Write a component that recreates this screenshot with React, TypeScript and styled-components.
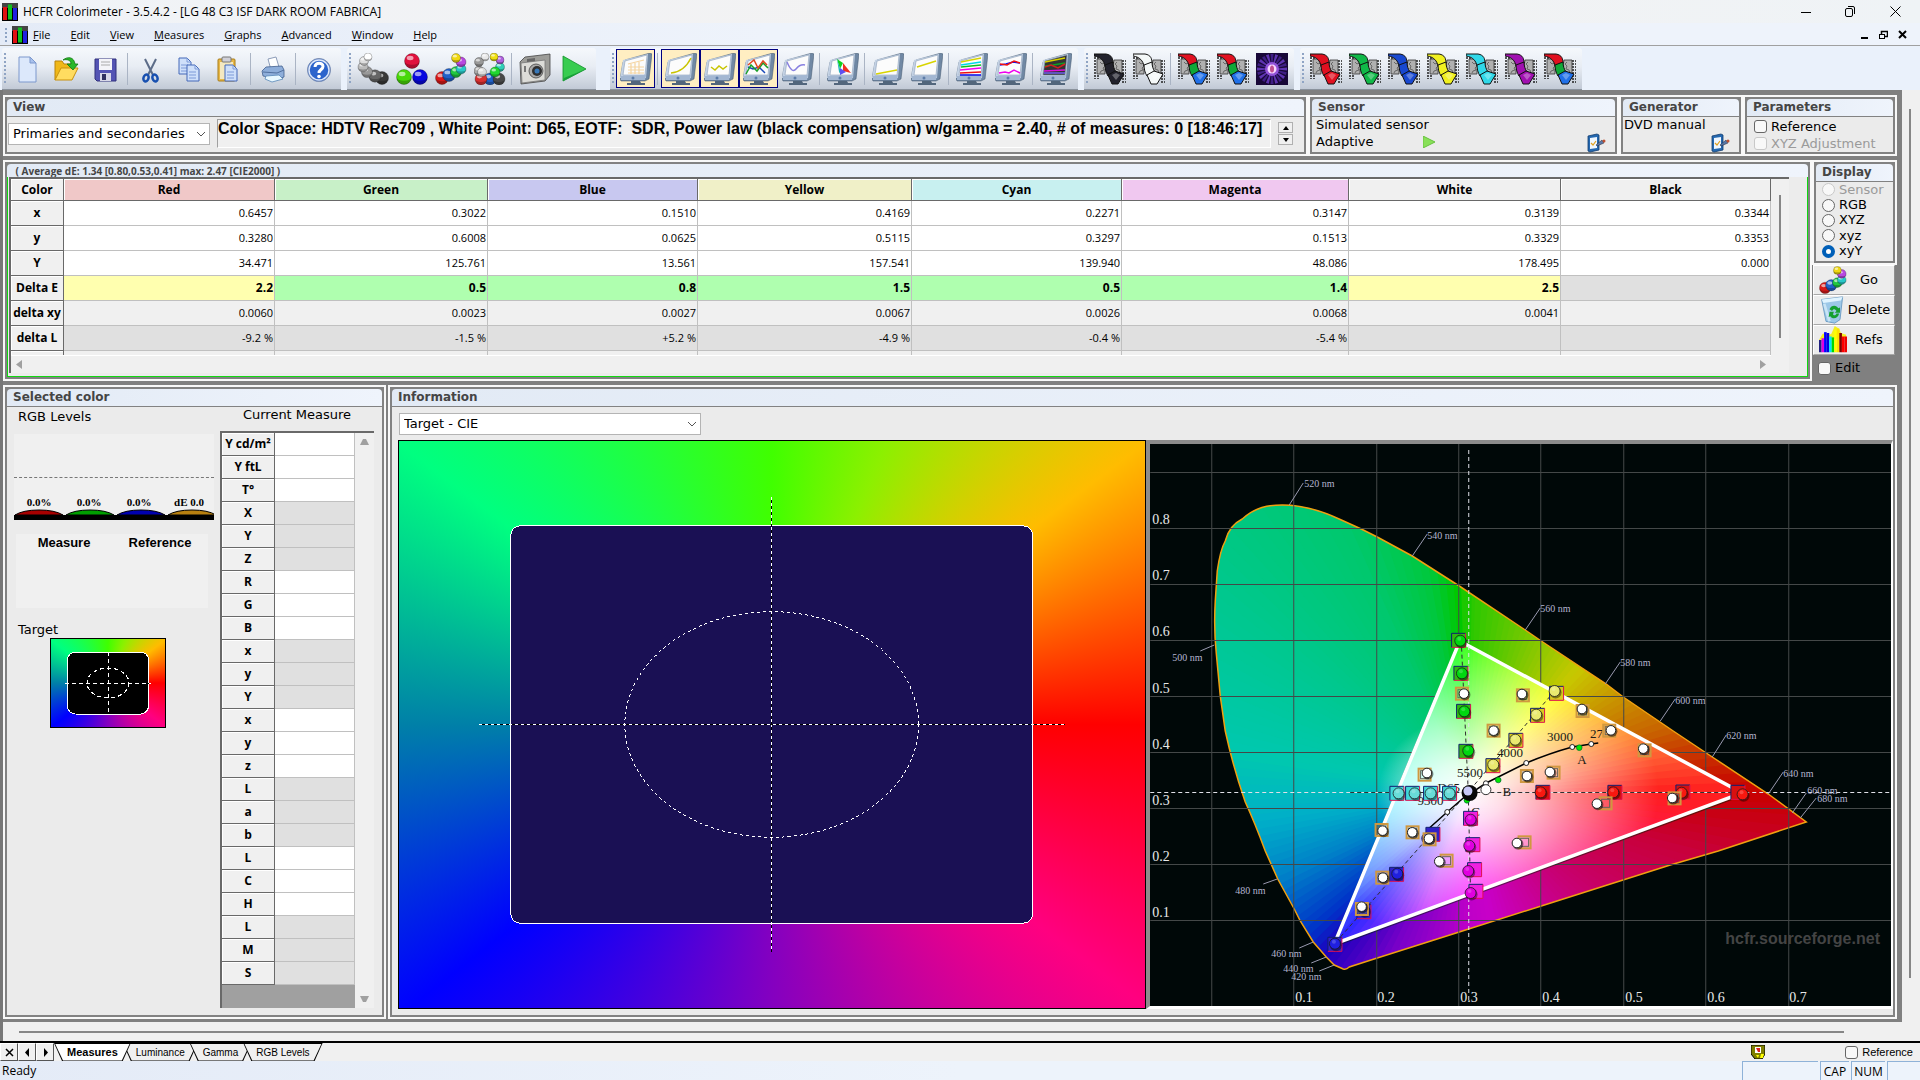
import React from "react";
import styled, { createGlobalStyle, css } from "styled-components";

const GlobalStyle = createGlobalStyle`
  * { box-sizing: border-box; }
  body { margin: 0; background: #f0f0f0; color: #000; font: 13px/16px "DejaVu Sans", Verdana, sans-serif; }
  button, input, select { font: inherit; color: inherit; margin: 0; padding: 0; }
`;

const ui = `"Open Sans", "Noto Sans", sans-serif`;
const arial = `"Liberation Sans", Arial, sans-serif`;
const serif = `"Liberation Serif", "Times New Roman", serif`;
const edge = "#828282";

/* ---------- window chrome ---------- */
const Window = styled.div`
  height: 100vh;
  min-height: 860px;
  display: flex;
  flex-direction: column;
`;
const TitleBar = styled.header`
  display: flex;
  align-items: center;
  height: 23px;
  flex: none;
  padding: 0 2px;
  background: linear-gradient(90deg, #f0f3f7, #f3f2f2 55%, #eff3f6);
  font: 12px/16px ${ui};
`;
const Title = styled.h1`
  margin: 0 0 0 5px;
  flex: 1;
  font: inherit;
`;
const WindowButton = styled.button<{ $small?: boolean }>`
  width: ${(p) => (p.$small ? 19 : 45)}px;
  height: 20px;
  border: 0;
  background: none;
  display: grid;
  place-items: center;
`;
const MenuBar = styled.nav`
  display: flex;
  align-items: center;
  height: 23px;
  flex: none;
  padding: 1px 8px 0 5px;
  background: linear-gradient(90deg, #e4ebf7, #eef3fb 40%);
  border-bottom: 1px solid #a0a0a0;
  font: 11px/16px ${ui};
`;
const MenuItem = styled.button`
  border: 0;
  background: none;
  padding: 0 9px;
  &::first-letter { text-decoration: underline; }
`;
const MenuList = styled.div`
  display: flex;
  flex: 1;
  gap: 2px;
  margin-left: -4px;
`;
const Grip = styled.span<{ $short?: boolean }>`
  width: 2px;
  flex: none;
  height: ${(p) => (p.$short ? 14 : 32)}px;
  background: repeating-linear-gradient(#8fa4c4 0 2px, transparent 2px 4px);
  margin: 0 ${(p) => (p.$short ? 5 : 2)}px 0 ${(p) => (p.$short ? 0 : 2)}px;
`;
const ToolbarRow = styled.div`
  display: flex;
  gap: 6px;
  height: 44px;
  flex: none;
  padding: 2px 2px 0;
  background: #eaf1fb;
`;
const Band = styled.div<{ $apart?: boolean }>`
  display: flex;
  align-items: center;
  padding-right: 3px;
  margin-left: ${(p) => (p.$apart ? 8 : 0)}px;
  border-radius: 3px 3px 0 0;
  background: linear-gradient(#f5f8fc, #e8edf4 45%, #c2cad6);
  border-bottom: 1px solid #8a929c;
`;
const ToolButton = styled.button<{ $on?: boolean }>`
  width: 39px;
  height: 39px;
  display: grid;
  place-items: center;
  border: ${(p) => (p.$on ? "1px solid #000080" : "0")};
  background: ${(p) => (p.$on ? "#ffeec2" : "none")};
`;
const ToolSeparator = styled.span`
  width: 1px;
  height: 32px;
  margin: 0 3px 0 2px;
  background: #aab4c4;
`;

/* ---------- workspace ---------- */
const Workspace = styled.main`
  display: grid;
  grid-template: minmax(0, 1fr) 19px / minmax(0, 1fr) 18px;
  flex: 1;
  min-height: 0;
  border-left: 3px solid #777;
  background: #f0f0f0;
`;
const Desk = styled.div`
  display: flex;
  flex-direction: column;
  gap: 4px;
  min-height: 0;
  padding: 5px 5px 3px 0;
  background: #808080;
`;
const ScrollBar = styled.div<{ $across?: boolean }>`
  display: flex;
  justify-content: center;
  background: #f0f0f0;
  ${(p) =>
    p.$across
      ? css`flex-direction: column; padding: 0 58px 0 16px;`
      : css`padding: 19px 3px 44px 0;`}
`;
const Thumb = styled.span<{ $across?: boolean }>`
  background: #868686;
  ${(p) => (p.$across ? css`height: 2px;` : css`width: 2px;`)}
`;
const TopRow = styled.div`
  display: flex;
  height: 61px;
  flex: none;
`;
const MeasureRow = styled.div`
  display: flex;
  height: 221px;
  flex: none;
`;
const DetailRow = styled.div`
  display: flex;
  gap: 2px;
  flex: 1;
  min-height: 0;
`;
const Frame = styled.section<{ $width?: number }>`
  display: flex;
  flex: ${(p) => (p.$width ? `0 0 ${p.$width}px` : "1 1 0")};
  min-width: 0;
  min-height: 0;
  padding: 2px;
  background: #f8f8f8;
`;
const FrameInner = styled.div`
  flex: 1;
  display: flex;
  flex-direction: column;
  min-width: 0;
  min-height: 0;
  border: 2px solid ${edge};
  background: ${edge};
`;
const FrameTitle = styled.h2<{ $thin?: boolean }>`
  margin: 0 0 ${(p) => (p.$thin ? 0 : 1)}px;
  height: ${(p) => (p.$thin ? 13 : 17)}px;
  flex: none;
  padding-left: 6px;
  overflow: hidden;
  white-space: pre;
  border-radius: 4px 4px 0 0;
  background: linear-gradient(90deg, #e2eaf5, #eff4fc);
  color: #454545;
  font: bold 12px/17px "DejaVu Sans", Verdana, sans-serif;
  ${(p) => p.$thin && css`font: bold 10px/15px ${ui};`}
`;
const FrameBody = styled.div`
  flex: 1;
  display: flex;
  min-height: 0;
  background: #ebebeb;
`;

const SelectWrap = styled.div<{ $width: number }>`
  position: relative;
  width: ${(p) => p.$width}px;
  height: 22px;
`;
const Select = styled.select`
  appearance: none;
  width: 100%;
  height: 22px;
  padding-left: 4px;
  border: 1px solid #b4b4b4;
  border-radius: 0;
  background: #fff;
`;
const Chevron = styled.svg`
  position: absolute;
  right: 4px;
  top: 8px;
  pointer-events: none;
`;
const ViewBody = styled(FrameBody)`
  gap: 7px;
  padding: 2px 11px 4px 1px;
  align-items: center;
`;
const StatusText = styled.output`
  flex: 1;
  height: 29px;
  overflow: hidden;
  white-space: pre;
  border: 1px solid;
  border-color: #a0a0a0 #fff #fff #a0a0a0;
  background: #f0f0f0;
  font: bold 16px/18px ${arial};
`;
const Spinner = styled.div`
  display: flex;
  flex-direction: column;
  gap: 1px;
`;
const SpinButton = styled.button`
  width: 15px;
  height: 11px;
  border: 1px solid #b0b0b0;
  background: #f0f0f0;
  display: grid;
  place-items: center;
`;
const LinesBody = styled(FrameBody)<{ $flush?: boolean }>`
  flex-direction: column;
  padding: 0 3px 0 ${(p) => (p.$flush ? 1 : 4)}px;
`;
const Line = styled.div`
  display: flex;
  align-items: center;
  height: 17px;
  line-height: 15px;
  padding-bottom: 2px;
  white-space: nowrap;
`;
const Spread = styled.span<{ $w: number }>`
  width: ${(p) => p.$w}px;
`;
const IconButton = styled.button<{ $right?: boolean }>`
  width: 20px;
  height: 18px;
  flex: none;
  border: 0;
  background: none;
  display: grid;
  place-items: center;
  margin-left: ${(p) => (p.$right ? "auto" : "0")};
  margin-right: ${(p) => (p.$right ? 6 : 0)}px;
`;
const Choice = styled.label<{ $off?: boolean; $height?: number }>`
  display: flex;
  align-items: center;
  gap: 4px;
  height: ${(p) => p.$height ?? 16}px;
  color: ${(p) => (p.$off ? "#9a9a9a" : "#000")};
  white-space: nowrap;
`;
const Tick = styled.input`
  appearance: none;
  width: 13px;
  height: 13px;
  flex: none;
  border: 1px solid #666;
  border-radius: ${(p) => (p.type === "radio" ? "50%" : "3px")};
  background: #f8f8f8;
  &:disabled { border-color: #c8c8c8; }
  &:checked { border: 4px solid #005fb8; background: #fff; }
`;
const ParamBody = styled(LinesBody)`
  padding: 1px 3px 0 7px;
`;

/* ---------- measures grid ---------- */
const GridBody = styled.div`
  flex: 1;
  display: flex;
  min-height: 0;
  padding: 0 18px 3px 1px;
  border: 1px solid #10d810;
  border-top: 0;
  background: #ececec;
`;
const GridBox = styled.div`
  flex: 1;
  min-width: 0;
  display: grid;
  grid-template: minmax(0, 1fr) 17px / minmax(0, 1fr) 18px;
  border: 1px solid #696969;
  border-width: 2px 0 0 2px;
  background: #f0f0f0;
`;
const GridView = styled.div`
  overflow: hidden;
  border-bottom: 1px solid #fff;
`;
const Table = styled.table`
  width: 100%;
  table-layout: fixed;
  border-spacing: 0;
  font: 11px/16px ${ui};
`;
const HeadCell = styled.th<{ $bg?: string }>`
  height: ${(p) => (p.scope === "col" ? 22 : 25)}px;
  padding: 0;
  font-size: 12px;
  background: ${(p) => p.$bg ?? "#f0f0f0"};
  border: solid #696969;
  border-width: 0 1px 1px 0;
  box-shadow: inset 1px 1px #fff;
`;
const Cell = styled.td<{ $bg: string; $bold?: boolean }>`
  height: 25px;
  padding: 0 1px;
  text-align: right;
  font-weight: ${(p) => (p.$bold ? "bold" : "normal")};
  font-size: ${(p) => (p.$bold ? 12 : 11)}px;
  background: ${(p) => p.$bg};
  border: solid #c0c0c0;
  border-width: 0 1px 1px 0;
`;
const GridScroll = styled.div<{ $across?: boolean }>`
  display: flex;
  ${(p) =>
    p.$across
      ? css`justify-content: space-between; align-items: center; padding: 0 4px;`
      : css`justify-content: center; padding: 16px 0 18px;`}
`;

/* ---------- display column ---------- */
const DisplayColumn = styled.div`
  flex: 0 0 85px;
  display: flex;
  flex-direction: column;
`;
const DisplayFrame = styled(Frame)`
  flex: none;
  height: 105px;
`;
const DisplayBody = styled(FrameBody)`
  flex-direction: column;
  justify-content: space-evenly;
  padding: 0 0 2px 6px;
`;
const SideButton = styled.button`
  display: flex;
  align-items: center;
  height: 30px;
  margin: 0 2px 0 1px;
  padding: 0 3px 0 5px;
  border: 1px solid;
  border-color: #fff #909090 #a8a8a8 #fff;
  background: #ececec;
`;
const SideLabel = styled.span`
  flex: 1;
  text-align: center;
`;
const EditChoice = styled(Choice)`
  padding: 0 0 0 6px;
  margin-top: 5px;
`;

/* ---------- selected colour ---------- */
const SelectedBody = styled(FrameBody)`
  justify-content: space-between;
  padding: 0 8px 7px 7px;
`;
const LeftStack = styled.div`
  display: flex;
  flex-direction: column;
  width: 200px;
`;
const Caption = styled.h3<{ $center?: boolean }>`
  margin: 0;
  height: 16px;
  font: 13px/16px "DejaVu Sans", Verdana, sans-serif;
  text-align: ${(p) => (p.$center ? "center" : "left")};
  padding-left: ${(p) => (p.$center ? 0 : 4)}px;
`;
const LevelsCaption = styled(Caption)`
  margin: 2px 0 9px;
`;
const Levels = styled.div`
  height: 86px;
  flex: none;
  display: flex;
  flex-direction: column;
  justify-content: flex-end;
  background: #f0f0f0;
  border-bottom: 5px solid #000;
`;
const LevelLine = styled.div`
  border-top: 1px dashed #777;
  margin-bottom: 18px;
`;
const LevelLabels = styled.div`
  display: grid;
  grid-template-columns: repeat(4, 1fr);
  text-align: center;
  font: bold 11px/13px ${serif};
`;
const Compare = styled.div`
  display: grid;
  grid-template-columns: 1fr 1fr;
  height: 74px;
  flex: none;
  margin: 14px 6px 14px 2px;
  text-align: center;
  background: #f0f0f0;
  font: bold 13px/17px ${arial};
`;
const SmallTarget = styled.div`
  width: 116px;
  height: 90px;
  margin-left: 36px;
  display: grid;
`;
const RightStack = styled.div`
  display: flex;
  flex-direction: column;
  width: 154px;
`;
const MeasureCaption = styled(Caption)`
  margin-bottom: 8px;
`;
const MeasureBox = styled.div`
  flex: 1;
  min-height: 0;
  display: flex;
  border: solid #696969;
  border-width: 2px 0 0 2px;
  background: #f0f0f0;
`;
const MeasureGrid = styled.div`
  width: 133px;
  overflow: hidden;
  background: #a0a0a0;
`;
const MeasureHead = styled.th`
  height: 23px;
  width: 53px;
  padding: 0;
  font: bold 12px/16px ${ui};
  background: #f0f0f0;
  border: solid #696969;
  border-width: 0 1px 1px 0;
  box-shadow: inset 1px 1px #fff;
`;
const MeasureCell = styled.td<{ $shade: boolean }>`
  padding: 0;
  background: ${(p) => (p.$shade ? "#e0e0e0" : "#fff")};
  border: solid #c0c0c0;
  border-width: 0 1px 1px 0;
`;
const ArrowColumn = styled.div`
  flex: 1;
  display: flex;
  flex-direction: column;
  justify-content: space-between;
  align-items: center;
  padding: 5px 0;
`;

/* ---------- information ---------- */
const InfoBody = styled(FrameBody)`
  flex-direction: column;
  padding: 6px 0 6px 6px;
`;
const InfoSelect = styled(SelectWrap)`
  margin: 0 0 5px 1px;
  flex: none;
`;
const Charts = styled.div`
  flex: 1;
  min-height: 0;
  display: grid;
  grid-template: minmax(0, 1fr) / minmax(0, 1fr) minmax(0, 1fr);
`;
const HueField = styled.div`
  display: grid;
  grid-template: minmax(0, 1fr) / minmax(0, 1fr);
  border: 1px solid #000;
  background: conic-gradient(
    #40ff00 0deg, #8cf000 22deg, #ffbc00 53deg, #ff0000 90deg, #ff0080 127deg,
    #8400c0 180deg, #0000ff 232deg, #0080a8 270deg, #00ff80 307deg, #40ff00 360deg
  );
`;
const ChartFrame = styled.div`
  display: grid;
  grid-template: minmax(0, 1fr) / minmax(0, 1fr);
  border: solid;
  border-width: 4px 2px 3px 4px;
  border-color: #8c8c8c #fff #fff #8c8c8c;
  background: #000808;
`;
const Drawing = styled.svg`
  display: block;
  width: 100%;
  height: 100%;
`;

/* ---------- tabs and status ---------- */
const TabBar = styled.div`
  display: flex;
  align-items: stretch;
  flex: none;
  height: 20px;
  background: #f0f0f0;
  border-top: 2px solid #000;
  font: 10px/17px ${arial};
`;
const TabNav = styled.button`
  width: 18px;
  border: 1px solid;
  border-color: #fff #555 #555 #fff;
  background: #f0f0f0;
  display: grid;
  place-items: center;
`;
const Tab = styled.button<{ $active?: boolean }>`
  position: relative;
  height: 18px;
  margin-right: -8px;
  padding: 0;
  border: 0;
  background: #000;
  clip-path: polygon(0 0, 100% 0, calc(100% - 8px) 100%, 8px 100%);
  z-index: ${(p) => (p.$active ? 1 : 0)};
  font-weight: ${(p) => (p.$active ? "bold" : "normal")};
  font-size: ${(p) => (p.$active ? 11 : 10)}px;
`;
const TabFace = styled.span<{ $active?: boolean }>`
  display: block;
  height: 17px;
  padding: 0 12px;
  margin: 0 1px;
  background: ${(p) => (p.$active ? "#fff" : "#f0f0f0")};
  clip-path: polygon(0 0, 100% 0, calc(100% - 8px) 100%, 8px 100%);
`;
const TabEnd = styled.div`
  margin-left: auto;
  display: flex;
  align-items: center;
  gap: 80px;
  padding-right: 7px;
  font: 11px/16px ${arial};
`;
const StatusBar = styled.footer`
  display: flex;
  gap: 2px;
  height: 19px;
  flex: none;
  padding-left: 2px;
  background: linear-gradient(90deg, #e4ebf7, #edf3fb 50%);
  font: 12px/19px ${ui};
`;
const StatusMessage = styled.span`
  flex: 1;
`;
const StatusPane = styled.span<{ $w: number }>`
  width: ${(p) => p.$w}px;
  border: 1px solid #8fb2d8;
  border-width: 1px 0 0 1px;
  text-align: center;
`;

/* ---------- icons ---------- */
const Icon = ({ children, size = 32, box = 32 }: { children: React.ReactNode; size?: number; box?: number }) => (
  <svg width={size} height={size} viewBox={`0 0 ${box} ${box}`} aria-hidden="true">{children}</svg>
);
const Logo = ({ size = 16 }: { size?: number }) => (
  <svg width={size} height={size + 2} viewBox="0 0 16 18" aria-hidden="true">
    <rect width="16" height="18" fill="#000" />
    <rect width="16" height="5" fill="#444" />
    <rect x="1" y="4" width="4" height="13" fill="#e01010" />
    <rect x="6" y="1.500" width="4" height="15" fill="#10c020" />
    <rect x="11" y="5" width="4" height="12" fill="#2020e0" />
  </svg>
);
const Ball = ({ x, y, r, c }: { x: number; y: number; r: number; c: string }) => (
  <g>
    <circle cx={x} cy={y} r={r} fill={c} stroke="#000" strokeOpacity=".35" strokeWidth=".7" />
    <path d={`M${x - r} ${y}A${r} ${r} 0 0 0 ${x + r} ${y}A${r} ${r * 0.5} 0 0 1 ${x - r} ${y}`} fill="#000" opacity=".25" />
    <ellipse cx={x - r * 0.25} cy={y - r * 0.4} rx={r * 0.45} ry={r * 0.3} fill="#fff" opacity=".6" />
  </g>
);
const Balls = ({ set }: { set: [number, number, number, string][] }) => (
  <>{set.map(([x, y, r, c], i) => <Ball key={i} x={x} y={y} r={r} c={c} />)}</>
);
const grayBalls: [number, number, number, string][] = [
  [25, 25, 6.5, "#383838"], [18, 23, 6.2, "#666"], [10, 19, 5.5, "#999"], [6, 14, 5, "#bbb"], [7, 8, 4.5, "#ddd"], [11, 4, 4, "#fff"],
];
const satBalls: [number, number, number, string][] = [
  [7, 25, 6.5, "#d81818"], [14, 22, 6.5, "#2060c8"], [21, 19, 5.5, "#20c840"], [26, 16, 5, "#28c8c8"], [26, 9, 5, "#b848e0"], [21, 5, 4.5, "#f0d810"],
];
const ringBalls: [number, number, number, string][] = [
  [16, 26, 6, "#2060c8"], [7, 26, 6, "#d83030"], [25, 26, 6, "#484848"], [5, 18, 5, "#aaa"], [8, 19, 4.5, "#ddd"], [26, 14, 4.5, "#30d0b8"], [21, 19, 5, "#20d830"],
  [26, 7, 4, "#b060e0"], [20, 4, 4, "#f0e010"], [11, 4, 4, "#e8e8e8"], [5, 9, 4.500, "#999"],
];

const NewIcon = () => (
  <Icon>
    <path d="M7 4h11l6 6v19H7z" fill="#dce8fb" stroke="#7d98cd" />
    <path d="M18 4v6h6z" fill="#a9c2ee" stroke="#7d98cd" />
  </Icon>
);
const OpenIcon = () => (
  <Icon>
    <path d="M4 27V8h7l2 3h10v5" fill="#f0b818" stroke="#b8820a" />
    <path d="M4 27l6-12h17l-6 12z" fill="#ffdc60" stroke="#c8900c" />
    <path d="M12 7c5-4 11-3 12 4h3l-5 6-6-6h4c0-4-4-5-8-4z" fill="#28b828" stroke="#107810" strokeWidth=".8" />
  </Icon>
);
const SaveIcon = () => (
  <Icon>
    <path d="M5 6h21v22H7l-2-2z" fill="#5454b4" stroke="#30307c" />
    <rect x="9" y="6" width="13" height="11" fill="#f4f4f8" />
    <path d="M11 9h9M11 12h9" stroke="#aaa" />
    <rect x="10" y="20" width="11" height="8" fill="#d8d8e8" />
    <rect x="12" y="21" width="4" height="6" fill="#303060" />
  </Icon>
);
const CutIcon = () => (
  <Icon>
    <path d="M10 6l8 16M21 6l-8 16" stroke="#5c6c88" strokeWidth="2" />
    <ellipse cx="11" cy="25" rx="2.500" ry="3.500" fill="none" stroke="#1850b0" strokeWidth="2.500" transform="rotate(20 11 25)" />
    <ellipse cx="20" cy="25" rx="2.500" ry="3.500" fill="none" stroke="#1850b0" strokeWidth="2.500" transform="rotate(-20 20 25)" />
  </Icon>
);
const Page = ({ x, y }: { x: number; y: number }) => (
  <g transform={`translate(${x} ${y})`}>
    <path d="M0 0h8l4 4v12H0z" fill="#cfe0fa" stroke="#4468b8" />
    <path d="M8 0v4h4M2 7h7M2 10h7M2 13h7" fill="none" stroke="#7c9ad8" />
  </g>
);
const CopyIcon = () => (<Icon><Page x={5} y={5} /><Page x={13} y={12} /></Icon>);
const PasteIcon = () => (
  <Icon>
    <rect x="5" y="6" width="17" height="22" rx="1" fill="#e8b848" stroke="#a87c18" />
    <rect x="7" y="9" width="13" height="17" fill="#f4e8c0" />
    <rect x="9" y="4" width="9" height="5" rx="1" fill="#d0d0d8" stroke="#777" />
    <Page x={12} y={12} />
  </Icon>
);
const PrintIcon = () => (
  <Icon>
    <path d="M10 6l8-2 3 10-8 3z" fill="#fff" stroke="#8c9cb8" />
    <path d="M4 18l4-4 16-1 2 4v7l-6 2-15-3z" fill="#8eaeda" stroke="#41608e" strokeWidth=".8" />
    <path d="M5 19l14 1 7-3" stroke="#51709e" fill="none" />
    <path d="M8 23l13-1 4 4-11 3-7-3z" fill="#e8f8ff" stroke="#5888b8" strokeWidth=".8" />
  </Icon>
);
const HelpIcon = () => (
  <Icon>
    <circle cx="16" cy="17" r="11.500" fill="#2c64cc" stroke="#8090b0" />
    <circle cx="16" cy="17" r="10" fill="none" stroke="#dfe8f8" strokeWidth="1.500" />
    <path d="M12 14c0-5 8-5 8-.5 0 3-4 3-4 6.500" fill="none" stroke="#fff" strokeWidth="3" />
    <circle cx="16" cy="23.500" r="1.800" fill="#fff" />
  </Icon>
);
const CameraIcon = () => (
  <Icon>
    <path d="M1 9l5-5 25-3v21l-5 6-24 3z" fill="#9c9c98" stroke="#444" strokeWidth=".8" />
    <path d="M2 10l24-3v20L3 30z" fill="#dcdcd8" stroke="#777" strokeWidth=".8" />
    <path d="M8 6l8-1v3l-8 1z" fill="#666" />
    <circle cx="17" cy="18" r="7" fill="#a8a8a8" stroke="#444" strokeWidth=".8" />
    <circle cx="18" cy="18" r="5" fill="#303030" />
    <circle cx="18" cy="18" r="2.500" fill="#3878b8" />
    <rect x="5" y="13" width="2" height="6" fill="#777" />
  </Icon>
);
const PlayIcon = () => (
  <Icon>
    <path d="M5 3l23 13L5 28z" fill="#38cc50" stroke="#109028" strokeWidth=".8" />
    <path d="M6 25l22-9L5 28z" fill="#18a038" />
  </Icon>
);
const Monitor = ({ dark, children }: { dark?: boolean; children?: React.ReactNode }) => (
  <Icon>
    <path d="M5 7L30 0l2 1-3 25-4 2H1l-1-2 3-17z" fill="#7088a4" stroke="#43576c" strokeWidth=".5" />
    <path d="M3 7l25-6-2 24H0z" fill="#c4d2e4" />
    <path d="M5 8l22-6-2 20H3z" fill={dark ? "#333" : "#fcfcfc"} stroke="#8ca0b8" strokeWidth=".6" />
    <path d="M1 23l25-1-1 5H1z" fill="#a3b7d2" />
    <circle cx="13" cy="25" r="1.500" fill="#5c7ca8" />
    <path d="M11 28h9l1 2h4v2H7v-2h4z" fill="#52667c" />
    {children}
  </Icon>
);
const Plot = ({ d, c }: { d: string; c: string }) => <path d={d} fill="none" stroke={c} strokeWidth="1.500" />;
const Film = ({ colors }: { colors: [string, string, string] }) => (
  <Icon>
    <path d="M1 1v25M4 1v25M29 7v24M32 7v24" stroke="#222" strokeWidth="1.500" strokeDasharray="2 1" />
    <path d="M3 6h5l3 3 3-2v6l-3 3v5H3zM20 7h8v18h-6l-4-6z" fill="#b0b0b0" stroke="#333" strokeWidth=".8" />
    <path d="M6 9l2 2 2-1 1 3-2 2 1 2-3 1-1 2M23 9l-2 2 2 2-1 3 3 1 1 3" fill="none" stroke="#555" strokeWidth=".8" />
    <path d="M0 1h12c6 1 7 5 7 9l-8 3C10 8 7 4 0 3z" fill={colors[0]} stroke="#111" />
    <path d="M11 12l8-3c0 4 1 7 3 10l-8 4c-2-3-3-7-3-11z" fill={colors[1]} stroke="#111" />
    <path d="M14 22l7-4 9 3-6 10h-6z" fill={colors[2]} stroke="#111" />
    <path d="M18 22l4-2 4 2-4 5z" fill="#fff" opacity=".3" />
  </Icon>
);
const Burst = () => (
  <Icon>
    <rect width="32" height="32" fill="#180838" />
    {Array.from({ length: 20 }, (_, i) => (
      <path key={i} d="M16 16L14.500 1h3z" fill={i % 2 ? "#7040d0" : "#4a2498"} opacity=".8" transform={`rotate(${i * 18} 16 16)`} />
    ))}
    <circle cx="16" cy="16" r="7" fill="#a860f0" opacity=".8" />
    <circle cx="16" cy="16" r="4.500" fill="#f8d8ff" />
    <ellipse cx="16" cy="16" rx="2" ry="3.500" fill="#c05090" />
  </Icon>
);
const ConfigIcon = () => (
  <svg width="19" height="20" viewBox="0 0 19 20" aria-hidden="true">
    <path d="M1 3l9-2 2 1v15l-9 2-2-1z" fill="#2468b0" stroke="#123c70" strokeWidth=".8" />
    <path d="M3 5l7-1v11l-7 1z" fill="#eef6ff" />
    <path d="M4 10l2 2 3-4" stroke="#e0a020" fill="none" strokeWidth="1.200" />
    <path d="M9 12l6-5 2 3-7 3z" fill="#5878a8" stroke="#223" strokeWidth=".5" />
    <circle cx="17" cy="8" r="1.500" fill="#c05030" />
  </svg>
);
const TrashArt = () => (
  <>
    <path d="M3 4l24-3-3 26-6 4-10-2z" fill="#9cc8e8" stroke="#6898c0" />
    <path d="M3 4l24-3-2 4-20 3z" fill="#e0f4ff" />
    <path d="M6 9l6 20" stroke="#e8f8ff" strokeWidth="3" opacity=".6" />
    <path d="M12 15c2-5 8-5 10-1l2-1v6h-6l2-2c-2-3-4-2-5 0zM23 20c-1 6-8 7-10 3l-2 1 1-6h5l-1 3c2 2 3 1 4-1z" fill="#14a030" />
  </>
);
const BarsArt = () => (
  <>
    <path d="M0 16l4-7 3-1 4 2 3-1 4-9 5 3 2 5 6 2v4z" fill="#f4f020" />
    {["#202080", "#e000e0", "#0000ff", "#0000e0", "#00e8f8", "#00d800", "#ffff00", "#ffe000", "#800000", "#ff0000", "#f00000"].map((c, i) => (
      <rect key={c} x={i * 2.9} y={[16, 14, 7, 8, 12, 13, 5, 3, 8, 12, 12][i]} width="3" height={[14, 16, 23, 22, 18, 17, 25, 27, 22, 18, 18][i]} fill={c} />
    ))}
  </>
);
const Arrow = ({ d, color = "#a0a0a0" }: { d: string; color?: string }) => (
  <svg width="9" height="9" viewBox="0 0 9 9" aria-hidden="true"><path d={d} fill={color} /></svg>
);
const left = "M6 0v9L2 4.500z", right = "M3 0v9l4-4.500z", up = "M0 7h9L6 1H3z", down = "M0 2h9L6 8H3z";
const bigLeft = "M7 0v9L1 4.500z", bigRight = "M2 0v9l6-4.500z";

/* ---------- chart drawings ---------- */
function TargetPattern({ w, h, boxW, boxH, r, rx, ry, armX, armY, fill, dash }: {
  w: number; h: number; boxW: number; boxH: number; r: number; rx: number; ry: number; armX: number; armY: number; fill: string; dash: string;
}) {
  const cx = w / 2, cy = h / 2;
  const cross = `M${cx - armX} ${cy}H${cx + armX}M${cx} ${cy - armY}V${cy + armY}`;
  return (
    <HueField>
      <Drawing viewBox={`0 0 ${w} ${h}`} preserveAspectRatio="none" role="img" aria-label="Target" shapeRendering="crispEdges">
        <rect x={cx - boxW / 2} y={cy - boxH / 2} width={boxW} height={boxH} rx={r} fill={fill} stroke="#fff" />
        <path d={cross} stroke="#000" />
        <path d={cross} stroke="#fff" strokeDasharray={dash} />
        <ellipse cx={cx} cy={cy} rx={rx} ry={ry} fill="none" stroke="#fff" strokeDasharray={dash} />
      </Drawing>
    </HueField>
  );
}

type Stop = [number, number, number, number];
const outerStops: Stop[] = [
  [0, 40, 200, 0], [42, 200, 200, 0], [72, 200, 100, 0], [90, 200, 0, 0], [105, 200, 0, 60], [135, 200, 0, 120], [170, 200, 0, 200],
  [180, 190, 0, 200], [205, 120, 0, 200], [221, 30, 0, 190], [228, 0, 50, 200], [246, 0, 130, 200], [262, 0, 175, 200], [280, 0, 200, 175],
  [302, 0, 200, 150], [335, 0, 200, 110], [350, 0, 200, 60], [357, 0, 200, 0], [360, 40, 200, 0],
];
const innerStops: Stop[] = [
  [0, 70, 255, 30], [20, 160, 255, 30], [42, 255, 255, 0], [65, 255, 160, 40], [80, 255, 90, 50], [90, 255, 30, 30], [110, 255, 20, 90],
  [140, 255, 10, 160], [178, 255, 0, 255], [200, 200, 50, 255], [221, 50, 40, 255], [230, 70, 120, 255], [250, 60, 200, 255],
  [270, 60, 255, 255], [300, 50, 255, 190], [335, 50, 255, 120], [355, 40, 255, 40], [360, 70, 255, 30],
];
const shade = (stops: Stop[], a: number) => {
  const i = Math.max(1, stops.findIndex((s) => s[0] >= a));
  const p = stops[i - 1], q = stops[i], t = (a - p[0]) / (q[0] - p[0]);
  return `rgb(${[1, 2, 3].map((k) => Math.round(p[k] + (q[k] - p[k]) * t)).join(",")})`;
};
const WX = 318, WY = 348;
const Wedges = ({ stops }: { stops: Stop[] }) => (
  <>
    {Array.from({ length: 180 }, (_, i) => {
      const a = (i * 2 * Math.PI) / 180, b = ((i * 2 + 3) * Math.PI) / 180;
      return <path key={i} fill={shade(stops, i * 2 + 1)} d={`M${WX} ${WY}L${WX + 700 * Math.sin(a)} ${WY - 700 * Math.cos(a)}L${WX + 700 * Math.sin(b)} ${WY - 700 * Math.cos(b)}Z`} />;
    })}
  </>
);

const locus = "M193 525L184 521L176 513L163 498L150 477L144 465L127.500 435L115 407C108 388 101 371 95 358C88 338 80 310 75 287L70 252L66 209C64 190 64 175 65 157L67 127C69 113 71 104 75 97C78 85 84 79 92 75C105 63 118 61 132 61C154 61 172 67 190 75.500L211 85L227 93L262 112L309 142L375 186L391 197L456 240L473 253L523 287L562 313L618 350L656 378L568 407L520 421L391 462L309 488L227 514L199 523Q196 526 193 525Z";
const triangle = "M309.500 197L592 349L184 500Z";

/* marker coordinates are in thirds of a chart unit, from (200, 157) */
const px = (v: number) => 200 + v / 3;
const py = (v: number) => 157 + v / 3;
type Mark = [number, number, number, number];
const marks: { color: string; side: string; list: Mark[] }[] = [
  { color: "#00d810", side: "#30b810", list: [[330, 119, 325, 118], [335, 217, 332, 217], [342, 331, 340, 331], [354, 449, 347, 451]] },
  { color: "#eaea70", side: "#d8c820", list: [[613, 270, 619, 277], [558, 341, 562, 343], [495, 416, 497, 418], [429, 491, 428, 494]] },
  { color: "#f81810", side: "#d81010", list: [[571, 574, 578, 574], [789, 574, 794, 574], [994, 575, 998, 573], [1177, 580, 1163, 574]] },
  { color: "#68dcd8", side: "#40d8d8", list: [[145, 577, 140, 577], [193, 577, 187, 577], [241, 577, 241, 577], [298, 577, 298, 577]] },
  { color: "#e000e0", side: "#f020e0", list: [[361, 656, 361, 652], [357, 734, 368, 731], [354, 810, 373, 806], [361, 876, 377, 871]] },
  { color: "#2020e0", side: "#3020c8", list: [[231, 712, 248, 700], [141, 818, 139, 820], [41, 928, 41, 932], [-46, 1028, -46, 1030]] },
];
const whiteMarks: Mark[] = [
  [341, 278, 335, 278], [515, 279, 518, 283], [430, 389, 430, 389], [695, 324, 697, 330], [782, 388, 777, 389], [879, 443, 883, 448],
  [230, 516, 223, 521], [530, 525, 530, 525], [599, 513, 610, 515], [740, 608, 766, 607], [966, 591, 973, 592], [97, 689, 94, 687],
  [186, 694, 187, 694], [236, 713, 238, 715], [500, 726, 523, 724], [267, 781, 289, 779], [98, 830, 96, 830], [34, 917, 35, 924],
];
const waves: [string, number, number, number, number, number, number][] = [
  ["520 nm", 139, 61, 153, 39, 154, 43], ["540 nm", 262, 112, 277, 90, 277, 95], ["560 nm", 375, 186, 390, 164, 390, 168],
  ["580 nm", 455, 240, 470, 218, 470, 222], ["600 nm", 510, 277, 525, 255, 525, 260], ["620 nm", 562, 313, 576, 291, 576, 295],
  ["640 nm", 618, 350, 633, 328, 633, 333], ["660 nm", 642, 369, 656, 349, 657, 350], ["680 nm", 650, 374, 666, 354, 667, 358],
  ["500 nm", 64, 201, 50, 207, 22, 217], ["480 nm", 127, 435, 113, 440, 85, 450], ["460 nm", 163, 498, 149, 504, 121, 513],
  ["440 nm", 176, 513, 161, 519, 133, 528], ["420 nm", 184, 521, 169, 527, 141, 536],
];
const temps: [string, number, number][] = [
  ["3000", 590, 420], ["27", 719, 411], ["4000", 440, 468], ["5500", 320, 528], ["D65", 262, 573], ["9300", 202, 613], ["A", 681, 489], ["B", 457, 584], ["C", 363, 644],
];
const WaveText = styled.text`
  font: 10px ${serif};
  fill: #b4b4d0;
`;
const TempText = styled.text`
  font: 13px ${serif};
  fill: #201c18;
`;
const AxisText = styled.text`
  font: 14px ${serif};
  fill: #e8e8e8;
`;
const Watermark = styled.text`
  font: bold 16px ${arial};
  fill: #444;
`;

function CieChart() {
  return (
    <ChartFrame>
      <Drawing viewBox="0 0 741 562" role="img" aria-label="CIE chromaticity diagram">
        <defs>
          <clipPath id="locus"><path d={locus} /></clipPath>
          <clipPath id="gamut"><path d={triangle} /></clipPath>
          <radialGradient id="white" gradientUnits="userSpaceOnUse" cx="0" cy="0" r="1" gradientTransform={`translate(${WX} ${WY}) scale(190 150)`}>
            <stop offset="0" stopColor="#fff" />
            <stop offset=".2" stopColor="#fff" stopOpacity=".85" />
            <stop offset=".6" stopColor="#fff" stopOpacity=".4" />
            <stop offset="1" stopColor="#fff" stopOpacity="0" />
          </radialGradient>
          <radialGradient id="halo" gradientUnits="userSpaceOnUse" cx="0" cy="0" r="1" gradientTransform={`translate(${WX} ${WY}) scale(90 76)`}>
            <stop offset=".6" stopColor="#c8f0e8" stopOpacity=".6" />
            <stop offset="1" stopColor="#c8f0e8" stopOpacity="0" />
          </radialGradient>
        </defs>
        <g clipPath="url(#locus)"><Wedges stops={outerStops} /><rect width="741" height="562" fill="url(#halo)" /></g>
        <path d={locus} fill="none" stroke="#f0a010" strokeWidth="1.500" />
        <g stroke="#444848">
          {Array.from({ length: 8 }, (_, i) => <path key={i} d={`M${Math.floor(61.200 + 82.400 * i)}.5 0V562`} />)}
          {Array.from({ length: 9 }, (_, i) => <path key={i} d={`M0 ${Math.floor(28 + 56.100 * i)}.5H741`} />)}
        </g>
        <path d={triangle} fill="none" stroke="#002000" strokeOpacity=".5" strokeWidth="3" transform="translate(-1 2)" />
        <g clipPath="url(#gamut)"><Wedges stops={innerStops} /><rect width="741" height="562" fill="url(#white)" /></g>
        <path d={triangle} fill="none" stroke="#fff" strokeWidth="3.500" />
        <path d="M0 348.500H741M318.500 6V556" stroke="#e0e0e8" strokeDasharray="4 3" />
        <path d={`M200 348.500H590M${px(333)} ${py(119)}L318 348L${px(361)} ${py(876)}M${px(613)} ${py(270)}L318 348L184 500`} fill="none" stroke="#303030" strokeDasharray="4 3" />
        {waves.map(([t, x1, y1, x2, y2, tx, ty]) => (
          <g key={t}>
            <path d={`M${x1} ${y1}L${x2} ${y2}`} stroke="#9a9ab0" />
            <WaveText x={tx} y={ty}>{t}</WaveText>
          </g>
        ))}
        <path d="M278 385L297 368L313 354L336 339L376 319Q400 309 422 303L441 300L448 299" fill="none" stroke="#000" strokeWidth="1.500" />
        {temps.map(([t, x, y]) => <TempText key={t} x={px(x)} y={py(y)}>{t}</TempText>)}
        {[[687, 440], [444, 537], [350, 598]].map(([x, y]) => <circle key={x} cx={px(x)} cy={py(y)} r="2.800" fill="#00e800" stroke="#063" strokeWidth=".7" />)}
        {[[291, 633], [407, 547], [528, 486], [666, 438], [723, 429]].map(([x, y]) => <circle key={x} cx={px(x)} cy={py(y)} r="2.500" fill="#fff" stroke="#222" />)}
        {marks.map(({ color, side, list }) => list.map(([x, y, sx, sy]) => (
          <g key={`${x}-${y}`}>
            <rect x={px(sx) - 7} y={py(sy) - 7} width="14" height="14" fill={side} />
            <path d={`M${px(sx) - 7} ${py(sy) + 7}v-14h14`} fill="none" stroke="#102070" />
            <path d={`M${px(sx) - 7} ${py(sy) + 7}h14v-14`} fill="none" stroke="#e01050" />
            <circle cx={px(x) + 1} cy={py(y) + 1.500} r="6" opacity=".4" />
            <circle cx={px(x)} cy={py(y)} r="5.500" fill={color} stroke="#181818" strokeOpacity=".75" />
            <circle cx={px(x) - 1} cy={py(y) - 2} r="2" fill="#fff" opacity=".2" />
          </g>
        )))}
        {whiteMarks.map(([x, y, sx, sy]) => (
          <g key={`${x}-${y}`}>
            <rect x={px(sx) - 6} y={py(sy) - 6} width="12" height="12" fill="none" stroke="#d09840" strokeWidth="2" />
            <rect x={px(sx) - 4} y={py(sy) - 4} width="8" height="8" fill="none" stroke="#686858" />
            <circle cx={px(x) + 1} cy={py(y) + 1} r="5.500" opacity=".5" />
            <circle cx={px(x)} cy={py(y)} r="4.800" fill="#fff" stroke="#222" />
          </g>
        ))}
        <circle cx={px(407)} cy={py(566)} r="5" fill="#fff" stroke="#333" />
        <circle cx={px(358)} cy={py(576)} r="8" fill="#080808" />
        <circle cx={px(353)} cy={py(570)} r="4.500" fill="#c8c8f8" />
        {[1, 2, 3, 4, 5, 6, 7].map((n) => <AxisText key={n} x={Math.floor(63 + 82.400 * n)} y="558">{`0.${n}`}</AxisText>)}
        {[1, 2, 3, 4, 5, 6, 7, 8].map((n) => <AxisText key={n} x="2" y={Math.round(529 - 56.100 * n)}>{`0.${n}`}</AxisText>)}
        <Watermark x="575" y="500">hcfr.sourceforge.net</Watermark>
      </Drawing>
    </ChartFrame>
  );
}

/* ---------- data ---------- */
const columns: [string, string | undefined, number][] = [
  ["Red", "#f0c8c8", 211], ["Green", "#c8f0c8", 213], ["Blue", "#c8c8f0", 210], ["Yellow", "#f0f0c8", 214],
  ["Cyan", "#c8f0f0", 210], ["Magenta", "#f0c8f0", 227], ["White", undefined, 212], ["Black", undefined, 210],
];
const rows: [string, string, string[]][] = [
  ["x", "#fff", ["0.6457", "0.3022", "0.1510", "0.4169", "0.2271", "0.3147", "0.3139", "0.3344"]],
  ["y", "#fff", ["0.3280", "0.6008", "0.0625", "0.5115", "0.3297", "0.1513", "0.3329", "0.3353"]],
  ["Y", "#fff", ["34.471", "125.761", "13.561", "157.541", "139.940", "48.086", "178.495", "0.000"]],
  ["Delta E", "#afffaf", ["2.2", "0.5", "0.8", "1.5", "0.5", "1.4", "2.5", ""]],
  ["delta xy", "#f0f0f0", ["0.0060", "0.0023", "0.0027", "0.0067", "0.0026", "0.0068", "0.0041", ""]],
  ["delta L", "#e0e0e0", ["-9.2 %", "-1.5 %", "+5.2 %", "-4.9 %", "-0.4 %", "-5.4 %", "", ""]],
  ["", "#f0f0f0", ["", "", "", "", "", "", "", ""]],
];
const measureRows = ["Y cd/m²", "Y ftL", "T°", "X", "Y", "Z", "R", "G", "B", "x", "y", "Y", "x", "y", "z", "L", "a", "b", "L", "C", "H", "L", "M", "S"];
const cellColor = (label: string, base: string, value: string) =>
  label !== "Delta E" ? base : value === "" ? "#e0e0e0" : parseFloat(value) > 2 ? "#ffffaf" : base;

const solid = (c: string): [string, string, string] => [c, c, c];
const rgb: [string, string, string] = ["#e01020", "#10a838", "#2070e8"];

type Tool = "|" | { name: string; icon: React.ReactNode; on?: boolean };
const tool = (name: string, icon: React.ReactNode, on?: boolean): Tool => ({ name, icon, on });
const bands: Tool[][] = [
  [tool("New", <NewIcon />), tool("Open", <OpenIcon />), tool("Save", <SaveIcon />), "|", tool("Cut", <CutIcon />), tool("Copy", <CopyIcon />),
    tool("Paste", <PasteIcon />), "|", tool("Print", <PrintIcon />), "|", tool("Help", <HelpIcon />)],
  [tool("Grays", <Icon><Balls set={grayBalls} /></Icon>),
    tool("Primaries", <Icon><Balls set={[[16, 8, 7.5, "#e0103c"], [8, 24, 7.5, "#48d808"], [24, 24, 7.5, "#0808e0"]]} /></Icon>),
    tool("Saturations", <Icon><Balls set={satBalls} /></Icon>), tool("Checker", <Icon><Balls set={ringBalls} /></Icon>), "|",
    tool("Camera", <CameraIcon />), tool("Run", <PlayIcon />)],
  [tool("Data view", <Monitor><path d="M8 11l16-4M8 14h16M8 17h16M8 20h16M11 11v10M15 10v11M19 9v12" stroke="#f4d4a0" strokeWidth="1.200" /></Monitor>, true), "|",
    tool("Luminance", <Monitor><Plot c="#c8c400" d="M6 20q13-1 20-15" /></Monitor>, true),
    tool("Gamma", <Monitor><Plot c="#c8c400" d="M7 14l4 3 4-4 4 3 4-3" /></Monitor>, true),
    tool("RGB levels", <Monitor><Plot c="#1848b8" d="M5 14l5 2 6-2 6 6" /><Plot c="#18a028" d="M3 21l5-9 6 6 6-8 5 5" /><Plot c="#e04820" d="M5 12l6-5 4 8 5-7 4 4" /></Monitor>, true),
    tool("Temperature", <Monitor><Plot c="#8880e0" d="M5 9q5 12 9 7t9-4" /></Monitor>), "|",
    tool("CIE", <Monitor><path d="M10 6l6 4-3 6z" fill="#10d020" /><path d="M16 10l8 10-8-2z" fill="#f03020" /><path d="M10 6l3 10 1 6-2-3z" fill="#20b0c0" /><path d="M13 15l6 4-6 3z" fill="#6050f0" /></Monitor>), "|",
    tool("Near black", <Monitor><Plot c="#d8d400" d="M4 21l21-4" /></Monitor>),
    tool("Near white", <Monitor><Plot c="#d8d400" d="M6 14l19-6" /></Monitor>), "|",
    tool("Saturation luminance", <Monitor><Plot c="#d8d400" d="M5 9l20-4" /><Plot c="#00d8e8" d="M5 12l20-3" /><Plot c="#10c020" d="M5 14l20-2" /><Plot c="#f000f0" d="M4 17l21-2" /><Plot c="#f01010" d="M4 20l21-1" /><Plot c="#1010f0" d="M4 22h21" /></Monitor>),
    tool("Saturation shift", <Monitor><Plot c="#1010f0" d="M5 12l6-1 7-2 7 1" /><Plot c="#f01010" d="M5 11l7 1 7-4 6 2" /><Plot c="#f000f0" d="M4 20l6-1 4 1 5-3 6 3" /></Monitor>), "|",
    tool("Combined", <Monitor dark><Plot c="#d8d400" d="M5 9l20-4" /><Plot c="#10a020" d="M5 13l8-1 12-2" /><Plot c="#d02020" d="M5 14l6-2 7 3 7-4" /><Plot c="#e010e0" d="M4 18l21-1" /><Plot c="#7060f0" d="M4 20h21" /></Monitor>)],
  [tool("Near black scale", <Film colors={solid("#22222c")} />), tool("Near white scale", <Film colors={solid("#f4f8f8")} />), "|",
    tool("Primary colors", <Film colors={rgb} />), tool("Secondary colors", <Film colors={rgb} />), tool("Pattern", <Burst />)],
  [tool("Red", <Film colors={solid("#e01020")} />), tool("Green", <Film colors={solid("#10b848")} />), tool("Blue", <Film colors={solid("#1848d0")} />),
    tool("Yellow", <Film colors={solid("#f0f020")} />), tool("Cyan", <Film colors={solid("#30d8e8")} />), tool("Magenta", <Film colors={solid("#a010b0")} />),
    tool("All colors", <Film colors={rgb} />)],
];

const DropDown = ({ label, value, width, Wrap = SelectWrap }: { label: string; value: string; width: number; Wrap?: typeof SelectWrap }) => (
  <Wrap $width={width}>
    <Select aria-label={label}><option>{value}</option></Select>
    <Chevron width="10" height="6" viewBox="0 0 10 6"><path d="M1 1l4 4 4-4" fill="none" stroke="#555" /></Chevron>
  </Wrap>
);

const Panel = ({ title, width, children }: { title: string; width?: number; children: React.ReactNode }) => (
  <Frame $width={width}><FrameInner><FrameTitle>{title}</FrameTitle>{children}</FrameInner></Frame>
);

export default function App() {
  return (
    <Window>
      <GlobalStyle />
      <TitleBar>
        <Logo />
        <Title>HCFR Colorimeter - 3.5.4.2 - [LG 48 C3 ISF DARK ROOM FABRICA]</Title>
        <WindowButton aria-label="Minimize"><svg width="10" height="10"><path d="M0 5.500h10" stroke="#000" /></svg></WindowButton>
        <WindowButton aria-label="Restore"><svg width="11" height="11" fill="none" stroke="#000"><rect x=".5" y="2.500" width="7" height="8" rx="1.500" /><path d="M3 .500h5q1.500 0 1.500 1.500v6" /></svg></WindowButton>
        <WindowButton aria-label="Close"><svg width="11" height="11"><path d="M.5.500l10 10m0-10l-10 10" stroke="#000" /></svg></WindowButton>
      </TitleBar>
      <MenuBar>
        <Grip $short />
        <Logo />
        <MenuList>
          {["File", "Edit", "View", "Measures", "Graphs", "Advanced", "Window", "Help"].map((m) => <MenuItem key={m}>{m}</MenuItem>)}
        </MenuList>
        <WindowButton $small aria-label="Minimize document"><svg width="8" height="9"><path d="M0 8h7" stroke="#000" strokeWidth="2" /></svg></WindowButton>
        <WindowButton $small aria-label="Restore document"><svg width="9" height="9" fill="none" stroke="#000"><rect x=".5" y="4.500" width="5" height="4" /><path d="M2.500 4V1.500h6v5H6" strokeWidth="1.500" /></svg></WindowButton>
        <WindowButton $small aria-label="Close document"><svg width="9" height="9"><path d="M1 1l7 7m0-7l-7 7" stroke="#000" strokeWidth="2" /></svg></WindowButton>
      </MenuBar>
      <ToolbarRow>
        {bands.map((band, b) => (
          <Band key={b} $apart={b === 2}>
            <Grip />
            {band.map((t, i) => (t === "|" ? <ToolSeparator key={i} /> : <ToolButton key={i} $on={t.on} aria-label={t.name}>{t.icon}</ToolButton>))}
          </Band>
        ))}
      </ToolbarRow>

      <Workspace>
        <Desk>
          <TopRow>
            <Panel title="View">
              <ViewBody>
                <DropDown label="View" value="Primaries and secondaries" width={202} />
                <StatusText>{"Color Space: HDTV Rec709 , White Point: D65, EOTF:  SDR, Power law (black compensation) w/gamma = 2.40, # of measures: 0 [18:46:17]"}</StatusText>
                <Spinner>
                  <SpinButton aria-label="Previous"><svg width="6" height="4"><path d="M0 4l3-4 3 4z" /></svg></SpinButton>
                  <SpinButton aria-label="Next"><svg width="6" height="4"><path d="M0 0l3 4 3-4z" /></svg></SpinButton>
                </Spinner>
              </ViewBody>
            </Panel>
            <Panel title="Sensor" width={311}>
              <LinesBody>
                <Line>Simulated sensor</Line>
                <Line>
                  <Spread $w={103}>Adaptive</Spread>
                  <IconButton aria-label="Start sensor"><svg width="12" height="12"><path d="M0 0l12 6-12 6z" fill="#88e058" stroke="#68c040" /></svg></IconButton>
                  <IconButton $right aria-label="Configure sensor"><ConfigIcon /></IconButton>
                </Line>
              </LinesBody>
            </Panel>
            <Panel title="Generator" width={124}>
              <LinesBody $flush>
                <Line>DVD manual</Line>
                <Line><IconButton $right aria-label="Configure generator"><ConfigIcon /></IconButton></Line>
              </LinesBody>
            </Panel>
            <Panel title="Parameters" width={154}>
              <ParamBody>
                <Choice $height={17}><Tick type="checkbox" />Reference</Choice>
                <Choice $height={17} $off><Tick type="checkbox" disabled />XYZ Adjustment</Choice>
              </ParamBody>
            </Panel>
          </TopRow>

          <MeasureRow>
            <Frame>
              <FrameInner>
                <FrameTitle $thin>{" ( Average dE: 1.34 [0.80,0.53,0.41] max: 2.47 [CIE2000] )"}</FrameTitle>
                <GridBody>
                  <GridBox>
                    <GridView>
                      <Table>
                        <colgroup>
                          <col style={{ width: 53 }} />
                          {columns.map(([c, , w]) => <col key={c} style={{ width: w }} />)}
                        </colgroup>
                        <thead>
                          <tr>
                            <HeadCell scope="col">Color</HeadCell>
                            {columns.map(([c, bg]) => <HeadCell key={c} scope="col" $bg={bg}>{c}</HeadCell>)}
                          </tr>
                        </thead>
                        <tbody>
                          {rows.map(([label, bg, values], r) => (
                            <tr key={r}>
                              <HeadCell scope="row">{label}</HeadCell>
                              {values.map((v, i) => <Cell key={i} $bg={cellColor(label, bg, v)} $bold={label === "Delta E"}>{v}</Cell>)}
                            </tr>
                          ))}
                        </tbody>
                      </Table>
                    </GridView>
                    <GridScroll><Thumb /></GridScroll>
                    <GridScroll $across><Arrow d={bigLeft} /><Arrow d={bigRight} /></GridScroll>
                  </GridBox>
                </GridBody>
              </FrameInner>
            </Frame>
            <DisplayColumn>
              <DisplayFrame>
                <FrameInner>
                  <FrameTitle>Display</FrameTitle>
                  <DisplayBody>
                    {["Sensor", "RGB", "XYZ", "xyz", "xyY"].map((d) => (
                      <Choice key={d} $height={15} $off={d === "Sensor"}>
                        <Tick type="radio" name="display" disabled={d === "Sensor"} defaultChecked={d === "xyY"} />{d}
                      </Choice>
                    ))}
                  </DisplayBody>
                </FrameInner>
              </DisplayFrame>
              <SideButton><Icon size={28}><Balls set={satBalls} /></Icon><SideLabel>Go</SideLabel></SideButton>
              <SideButton><Icon size={28}><TrashArt /></Icon><SideLabel>Delete</SideLabel></SideButton>
              <SideButton><Icon size={28}><BarsArt /></Icon><SideLabel>Refs</SideLabel></SideButton>
              <EditChoice><Tick type="checkbox" />Edit</EditChoice>
            </DisplayColumn>
          </MeasureRow>

          <DetailRow>
            <Panel title="Selected color" width={383}>
              <SelectedBody>
                <LeftStack>
                  <LevelsCaption>RGB Levels</LevelsCaption>
                  <Levels>
                    <LevelLine />
                    <LevelLabels><span>0.0%</span><span>0.0%</span><span>0.0%</span><span>dE 0.0</span></LevelLabels>
                    <svg width="200" height="6" viewBox="0 0 200 6" aria-hidden="true">
                      {["#a80000", "#00a000", "#0000b0", "#b88010"].map((c, i) => (
                        <path key={c} d={`M${i * 51 + 1} 6q8-5 24-5t24 5z`} fill={c} stroke="#000" />
                      ))}
                    </svg>
                  </Levels>
                  <Compare><span>Measure</span><span>Reference</span></Compare>
                  <Caption>Target</Caption>
                  <SmallTarget>
                    <TargetPattern w={114} h={88} boxW={81} boxH={62} r={8} rx={21} ry={15} armX={43} armY={31} fill="#000" dash="4 3" />
                  </SmallTarget>
                </LeftStack>
                <RightStack>
                  <MeasureCaption $center>Current Measure</MeasureCaption>
                  <MeasureBox>
                    <MeasureGrid>
                      <Table>
                        <tbody>
                          {measureRows.map((m, i) => (
                            <tr key={i}><MeasureHead scope="row">{m}</MeasureHead><MeasureCell $shade={Math.floor(i / 3) % 2 === 1} /></tr>
                          ))}
                        </tbody>
                      </Table>
                    </MeasureGrid>
                    <ArrowColumn><Arrow d={up} /><Arrow d={down} /></ArrowColumn>
                  </MeasureBox>
                </RightStack>
              </SelectedBody>
            </Panel>
            <Panel title="Information">
              <InfoBody>
                <DropDown label="Information" value="Target - CIE" width={302} Wrap={InfoSelect as typeof SelectWrap} />
                <Charts>
                  <TargetPattern w={746} h={568} boxW={522} boxH={398} r={9} rx={147} ry={113} armX={293} armY={228} fill="#1a1054" dash="3 3" />
                  <CieChart />
                </Charts>
              </InfoBody>
            </Panel>
          </DetailRow>
        </Desk>
        <ScrollBar><Thumb /></ScrollBar>
        <ScrollBar $across><Thumb $across /></ScrollBar>
      </Workspace>

      <TabBar>
        <TabNav aria-label="Close tab"><svg width="9" height="9"><path d="M1 1l7 7m0-7l-7 7" stroke="#000" strokeWidth="1.500" /></svg></TabNav>
        <TabNav aria-label="Scroll left"><Arrow d={left} color="#000" /></TabNav>
        <TabNav aria-label="Scroll right"><Arrow d={right} color="#000" /></TabNav>
        {["Measures", "Luminance", "Gamma", "RGB Levels"].map((t, i) => (
          <Tab key={t} $active={i === 0}><TabFace $active={i === 0}>{t}</TabFace></Tab>
        ))}
        <TabEnd>
          <svg width="14" height="14" viewBox="0 0 14 14" aria-hidden="true">
            <path d="M0 0h14v9l-3 5H4L0 9z" fill="#808000" stroke="#000" />
            <rect x="4" y="2" width="6" height="6" fill="#fff" />
            <path d="M5 3h4v4H7z" fill="#e02020" />
            <path d="M5 10h3l-1 3zM10 9h3l-1 4h-3z" fill="#ffff00" />
          </svg>
          <Choice><Tick type="checkbox" />Reference</Choice>
        </TabEnd>
      </TabBar>
      <StatusBar>
        <StatusMessage>Ready</StatusMessage>
        <StatusPane $w={76} />
        <StatusPane $w={29}>CAP</StatusPane>
        <StatusPane $w={34}>NUM</StatusPane>
        <StatusPane $w={33} />
      </StatusBar>
    </Window>
  );
}
